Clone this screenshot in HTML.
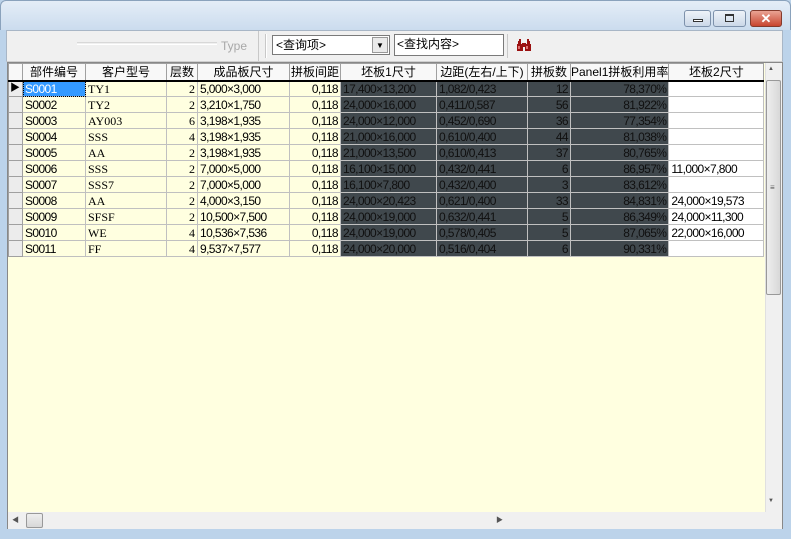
<!DOCTYPE html>
<html><head><meta charset="utf-8"><style>
*{margin:0;padding:0;box-sizing:border-box}
body{width:791px;height:539px;overflow:hidden;background:#bcd3ea;font-family:"Liberation Sans","Noto Sans CJK SC",sans-serif;font-size:12px;position:relative}
.abs{position:absolute}
#title{left:0;top:0;width:791px;height:30px;background:linear-gradient(#e4edf7,#cbdcee);border-radius:6px 6px 0 0;border:1px solid #8aa2bc;border-bottom:none}
.btn{top:10px;height:17px;border:1px solid #7d91ab;border-radius:3px;background:linear-gradient(#eef3f9,#cbd8e8)}
#tb{left:6px;top:30px;width:777px;height:32px;background:#f0f0f0;border:1px solid #a8b6c6;border-bottom:1px solid #d0d0d0}
table{position:absolute;left:8px;top:63px;border-collapse:collapse;table-layout:fixed;background:#ffffe0}
td{height:16px;border:1px solid #c0c0c0;padding:0 2px;white-space:nowrap;overflow:hidden;font-size:12px;line-height:14px;font-family:"Liberation Serif","Noto Sans CJK SC",serif;color:#000}
th{height:17px;border:1px solid #a0a0a0;border-bottom:2px solid #000;background:#f8f8f8;font-weight:normal;font-size:12px;line-height:14px;white-space:nowrap;overflow:hidden}
td.i{background:#ececec;border-color:#a0a0a0}
td.n{font-family:"Liberation Sans",sans-serif;letter-spacing:-0.6px}
td.r{text-align:right}
td.d{background:#40484d;color:#101010;border-color:#c0c0c0}
td.w{background:#fff}
</style></head><body>
<div id="title" class="abs"></div>
<div class="abs btn" style="left:684px;width:27px"><div class="abs" style="left:8px;top:8px;width:10px;height:3px;border:1px solid #333;background:#fff"></div></div>
<div class="abs btn" style="left:713px;width:33px"><div class="abs" style="left:11px;top:3px;width:9px;height:8px;border:1px solid #333;border-top-width:2px"></div></div>
<div class="abs btn" style="left:750px;width:32px;background:linear-gradient(#e9a394,#c8452f);border-color:#843a2c;color:#fff;font-weight:bold;text-align:center;line-height:15px;font-size:13px">✕</div>
<div id="tb" class="abs">
 <div class="abs" style="left:0;top:0;width:252px;height:30px;border-right:1px solid #c8c8c8"></div>
 <div class="abs" style="left:70px;top:11px;width:140px;height:3px;border-top:1px solid #d8d8d8;border-bottom:1px solid #fff"></div>
 <div class="abs" style="left:214px;top:8px;color:#a8a8a8;font-size:12px">Type</div>
 <div class="abs" style="left:258px;top:3px;width:1px;height:24px;border-left:1px solid #c8c8c8;border-right:1px solid #fff"></div>
 <div class="abs" style="left:265px;top:4px;width:118px;height:20px;border:1px solid #7a7a7a;background:#fff;padding-left:3px;line-height:18px">&lt;查询项&gt;
  <div class="abs" style="right:1px;top:1px;width:16px;height:16px;background:#eaeaea;border:1px solid #999;font-size:8px;text-align:center;line-height:15px">▼</div></div>
 <div class="abs" style="left:387px;top:3px;width:110px;height:22px;border:1px solid #7a7a7a;background:#fff;padding-left:2px;line-height:18px">&lt;查找内容&gt;</div>
 <div class="abs" style="left:500px;top:3px;width:1px;height:24px;border-left:1px solid #c8c8c8"></div>
 <svg class="abs" style="left:509px;top:7px" width="16" height="14" viewBox="0 0 16 14">
  <g fill="#9a1010"><path d="M2 3h3v3h-3z"/><path d="M11 3h3v3h-3z"/><path d="M1 6h6v7h-6z"/><path d="M9 6h6v7h-6z"/><path d="M6 5h4v4h-4z"/><path d="M3 1h2v2h-2z"/><path d="M11 1h2v2h-2z"/></g>
  <g fill="#e07070"><rect x="2" y="8" width="2" height="3"/><rect x="10" y="8" width="2" height="3"/></g>
 </svg>
</div>
<div class="abs" style="left:7px;top:62px;width:776px;height:467px;background:#ffffe0;border:1px solid #888"></div>
<table>
<colgroup><col style="width:14px"><col style="width:63px"><col style="width:81px"><col style="width:31px"><col style="width:92px"><col style="width:51px"><col style="width:96px"><col style="width:91px"><col style="width:43px"><col style="width:98px"><col style="width:95px"></colgroup>
<tr><th></th><th>部件编号</th><th>客户型号</th><th>层数</th><th>成品板尺寸</th><th>拼板间距</th><th>坯板1尺寸</th><th>边距(左右/上下)</th><th>拼板数</th><th>Panel1拼板利用率</th><th>坯板2尺寸</th></tr>
<tr><td class="i" style="font-size:10px;padding:0 1px">▶</td><td class="n" style="background:#3399ff;color:#fff;outline:1px dotted #000;outline-offset:-1px">S0001</td><td>TY1</td><td class="r">2</td><td class="n">5,000×3,000</td><td class="n r">0,118</td><td class="n d">17,400×13,200</td><td class="n d">1,082/0,423</td><td class="n d r">12</td><td class="n d r">78,370%</td><td class="w"></td></tr>
<tr><td class="i"></td><td class="n">S0002</td><td>TY2</td><td class="r">2</td><td class="n">3,210×1,750</td><td class="n r">0,118</td><td class="n d">24,000×16,000</td><td class="n d">0,411/0,587</td><td class="n d r">56</td><td class="n d r">81,922%</td><td class="w"></td></tr>
<tr><td class="i"></td><td class="n">S0003</td><td>AY003</td><td class="r">6</td><td class="n">3,198×1,935</td><td class="n r">0,118</td><td class="n d">24,000×12,000</td><td class="n d">0,452/0,690</td><td class="n d r">36</td><td class="n d r">77,354%</td><td class="w"></td></tr>
<tr><td class="i"></td><td class="n">S0004</td><td>SSS</td><td class="r">4</td><td class="n">3,198×1,935</td><td class="n r">0,118</td><td class="n d">21,000×16,000</td><td class="n d">0,610/0,400</td><td class="n d r">44</td><td class="n d r">81,038%</td><td class="w"></td></tr>
<tr><td class="i"></td><td class="n">S0005</td><td>AA</td><td class="r">2</td><td class="n">3,198×1,935</td><td class="n r">0,118</td><td class="n d">21,000×13,500</td><td class="n d">0,610/0,413</td><td class="n d r">37</td><td class="n d r">80,765%</td><td class="w"></td></tr>
<tr><td class="i"></td><td class="n">S0006</td><td>SSS</td><td class="r">2</td><td class="n">7,000×5,000</td><td class="n r">0,118</td><td class="n d">16,100×15,000</td><td class="n d">0,432/0,441</td><td class="n d r">6</td><td class="n d r">86,957%</td><td class="n w">11,000×7,800</td></tr>
<tr><td class="i"></td><td class="n">S0007</td><td>SSS7</td><td class="r">2</td><td class="n">7,000×5,000</td><td class="n r">0,118</td><td class="n d">16,100×7,800</td><td class="n d">0,432/0,400</td><td class="n d r">3</td><td class="n d r">83,612%</td><td class="w"></td></tr>
<tr><td class="i"></td><td class="n">S0008</td><td>AA</td><td class="r">2</td><td class="n">4,000×3,150</td><td class="n r">0,118</td><td class="n d">24,000×20,423</td><td class="n d">0,621/0,400</td><td class="n d r">33</td><td class="n d r">84,831%</td><td class="n w">24,000×19,573</td></tr>
<tr><td class="i"></td><td class="n">S0009</td><td>SFSF</td><td class="r">2</td><td class="n">10,500×7,500</td><td class="n r">0,118</td><td class="n d">24,000×19,000</td><td class="n d">0,632/0,441</td><td class="n d r">5</td><td class="n d r">86,349%</td><td class="n w">24,000×11,300</td></tr>
<tr><td class="i"></td><td class="n">S0010</td><td>WE</td><td class="r">4</td><td class="n">10,536×7,536</td><td class="n r">0,118</td><td class="n d">24,000×19,000</td><td class="n d">0,578/0,405</td><td class="n d r">5</td><td class="n d r">87,065%</td><td class="n w">22,000×16,000</td></tr>
<tr><td class="i"></td><td class="n">S0011</td><td>FF</td><td class="r">4</td><td class="n">9,537×7,577</td><td class="n r">0,118</td><td class="n d">24,000×20,000</td><td class="n d">0,516/0,404</td><td class="n d r">6</td><td class="n d r">90,331%</td><td class="w"></td></tr>
</table>
<div class="abs" style="left:765px;top:63px;width:17px;height:449px;background:#f0f0f0;border-left:1px solid #e0e0e0"></div>
<div class="abs" style="left:768px;top:66px;font-size:6px;color:#555">▲</div>
<div class="abs" style="left:768px;top:498px;font-size:6px;color:#555">▼</div>
<div class="abs" style="left:766px;top:80px;width:15px;height:215px;border:1px solid #999;border-radius:2px;background:linear-gradient(90deg,#eee,#d8d8d8)"></div>
<div class="abs" style="left:770px;top:183px;font-size:8px;color:#555">≡</div>
<div class="abs" style="left:8px;top:512px;width:757px;height:17px;background:#f0f0f0"></div>
<div class="abs" style="left:12px;top:515px;font-size:7px;color:#555">◀</div>
<div class="abs" style="left:26px;top:513px;width:17px;height:15px;border:1px solid #999;border-radius:2px;background:linear-gradient(#eee,#d8d8d8)"></div>
<div class="abs" style="left:496px;top:515px;font-size:7px;color:#555">▶</div>
<div class="abs" style="left:765px;top:512px;width:17px;height:17px;background:#f0f0f0"></div>
</body></html>
